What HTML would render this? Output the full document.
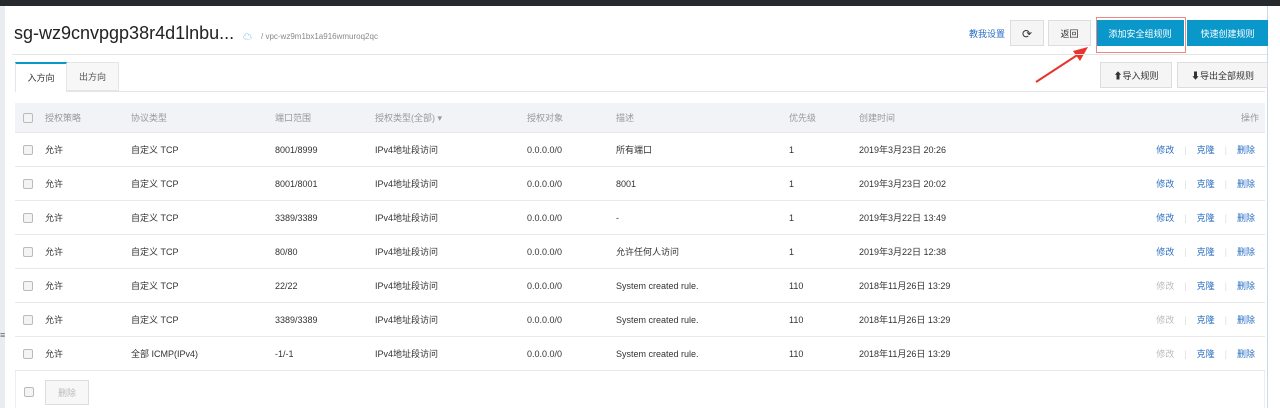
<!DOCTYPE html><html><head><meta charset="utf-8"><style>
body{margin:0;width:1280px;height:408px;overflow:hidden;background:#fff;font-family:"Liberation Sans","Noto Sans CJK SC",sans-serif;font-size:9px;color:#333;position:relative}
.a{position:absolute}
.top{left:0;top:0;width:1280px;height:6px;background:#262a2f}
.strip{left:0;top:6px;width:5px;height:402px;background:#e9edf2}
.rl{left:1267px;top:6px;width:1px;height:402px;background:#c9d9ea}
.btn{position:absolute;height:26px;line-height:26px;text-align:center;border:1px solid #ddd;background:#f5f5f5;box-sizing:border-box;font-size:9px;color:#333}
.blue{background:#0a98cb;border-color:#0a98cb;color:#fff}
.row{position:absolute;left:15px;width:1250px;height:34px;border-bottom:1px solid #e8e8e8;box-sizing:border-box}
.row span{position:absolute;top:0;line-height:34px;white-space:nowrap}
.cb{position:absolute;left:8px;top:12px;width:8px;height:8px;border:1px solid #bbb;border-radius:2px;background:#f4f4f4}
.ops{right:10px}
.ops i{font-style:normal;color:#2a6fc4}
.ops b{font-weight:normal;color:#ddd;margin:0 10px}
.g{color:#bbb!important}
</style></head><body>
<div class="a top"></div><div class="a strip"></div><div class="a rl"></div>
<div class="a" style="left:14px;top:23px;font-size:18px;color:#222">sg-wz9cnvpgp38r4d1lnbu...</div>
<div class="a" style="left:243px;top:30px;font-size:9px;color:#2a9fd6">☁</div>
<div class="a" style="left:261px;top:32px;font-size:8px;color:#888">/ vpc-wz9m1bx1a916wmuroq2qc</div>
<div class="a" style="left:969px;top:27px;color:#2a6fc4">教我设置</div>
<div class="btn" style="left:1010px;top:20px;width:34px;font-size:12px">⟳</div>
<div class="btn" style="left:1048px;top:20px;width:43px">返回</div>
<div class="btn blue" style="left:1096px;top:20px;width:88px">添加安全组规则</div>
<div class="btn blue" style="left:1187px;top:20px;width:81px">快速创建规则</div>
<div class="a" style="left:1096px;top:17px;width:90px;height:36px;border:1px solid #e88;box-sizing:border-box"></div>
<svg class="a" style="left:1030px;top:44px" width="64" height="42"><line x1="6" y1="38" x2="52" y2="8" stroke="#e8342c" stroke-width="2"/><polygon points="58,3 43,7 50,17" fill="#e8342c"/></svg>
<div class="a" style="left:12px;top:54px;width:1255px;height:1px;background:#e5e5e5"></div>
<div class="a" style="left:15px;top:91px;width:1250px;height:1px;background:#e5e5e5"></div>
<div class="a" style="left:15px;top:62px;width:52px;height:30px;border:1px solid #e5e5e5;border-top:2px solid #0a98cb;border-bottom:none;background:#fff;box-sizing:border-box;text-align:center;line-height:28px">入方向</div>
<div class="a" style="left:67px;top:62px;width:52px;height:29px;border:1px solid #e5e5e5;border-left:none;background:#f7f7f7;box-sizing:border-box;text-align:center;line-height:28px;color:#555">出方向</div>
<div class="btn" style="left:1100px;top:62px;width:72px">⬆导入规则</div>
<div class="btn" style="left:1177px;top:62px;width:91px">⬇导出全部规则</div>
<div class="row" style="top:103px;height:30px;background:#f1f3f6;color:#999"><div class="cb" style="top:10px"></div>
<span style="left:30px;line-height:30px">授权策略</span><span style="left:116px;line-height:30px">协议类型</span><span style="left:260px;line-height:30px">端口范围</span><span style="left:360px;line-height:30px">授权类型(全部) ▾</span><span style="left:512px;line-height:30px">授权对象</span><span style="left:601px;line-height:30px">描述</span><span style="left:774px;line-height:30px">优先级</span><span style="left:844px;line-height:30px">创建时间</span><span style="right:6px;line-height:30px">操作</span></div>
<div class="row" style="top:133px"><div class="cb"></div><span style="left:30px">允许</span><span style="left:116px">自定义 TCP</span><span style="left:260px">8001/8999</span><span style="left:360px">IPv4地址段访问</span><span style="left:512px">0.0.0.0/0</span><span style="left:601px">所有端口</span><span style="left:774px">1</span><span style="left:844px">2019年3月23日 20:26</span><span class="ops"><i>修改</i><b>|</b><i>克隆</i><b>|</b><i>删除</i></span></div>
<div class="row" style="top:167px"><div class="cb"></div><span style="left:30px">允许</span><span style="left:116px">自定义 TCP</span><span style="left:260px">8001/8001</span><span style="left:360px">IPv4地址段访问</span><span style="left:512px">0.0.0.0/0</span><span style="left:601px">8001</span><span style="left:774px">1</span><span style="left:844px">2019年3月23日 20:02</span><span class="ops"><i>修改</i><b>|</b><i>克隆</i><b>|</b><i>删除</i></span></div>
<div class="row" style="top:201px"><div class="cb"></div><span style="left:30px">允许</span><span style="left:116px">自定义 TCP</span><span style="left:260px">3389/3389</span><span style="left:360px">IPv4地址段访问</span><span style="left:512px">0.0.0.0/0</span><span style="left:601px">-</span><span style="left:774px">1</span><span style="left:844px">2019年3月22日 13:49</span><span class="ops"><i>修改</i><b>|</b><i>克隆</i><b>|</b><i>删除</i></span></div>
<div class="row" style="top:235px"><div class="cb"></div><span style="left:30px">允许</span><span style="left:116px">自定义 TCP</span><span style="left:260px">80/80</span><span style="left:360px">IPv4地址段访问</span><span style="left:512px">0.0.0.0/0</span><span style="left:601px">允许任何人访问</span><span style="left:774px">1</span><span style="left:844px">2019年3月22日 12:38</span><span class="ops"><i>修改</i><b>|</b><i>克隆</i><b>|</b><i>删除</i></span></div>
<div class="row" style="top:269px"><div class="cb"></div><span style="left:30px">允许</span><span style="left:116px">自定义 TCP</span><span style="left:260px">22/22</span><span style="left:360px">IPv4地址段访问</span><span style="left:512px">0.0.0.0/0</span><span style="left:601px">System created rule.</span><span style="left:774px">110</span><span style="left:844px">2018年11月26日 13:29</span><span class="ops"><i class="g">修改</i><b>|</b><i>克隆</i><b>|</b><i>删除</i></span></div>
<div class="row" style="top:303px"><div class="cb"></div><span style="left:30px">允许</span><span style="left:116px">自定义 TCP</span><span style="left:260px">3389/3389</span><span style="left:360px">IPv4地址段访问</span><span style="left:512px">0.0.0.0/0</span><span style="left:601px">System created rule.</span><span style="left:774px">110</span><span style="left:844px">2018年11月26日 13:29</span><span class="ops"><i class="g">修改</i><b>|</b><i>克隆</i><b>|</b><i>删除</i></span></div>
<div class="row" style="top:337px"><div class="cb"></div><span style="left:30px">允许</span><span style="left:116px">全部 ICMP(IPv4)</span><span style="left:260px">-1/-1</span><span style="left:360px">IPv4地址段访问</span><span style="left:512px">0.0.0.0/0</span><span style="left:601px">System created rule.</span><span style="left:774px">110</span><span style="left:844px">2018年11月26日 13:29</span><span class="ops"><i class="g">修改</i><b>|</b><i>克隆</i><b>|</b><i>删除</i></span></div>
<div class="a" style="left:15px;top:371px;width:1250px;height:37px;border-left:1px solid #eee;border-right:1px solid #eee;box-sizing:border-box"><div class="cb" style="top:16px"></div><div class="btn" style="left:29px;top:9px;width:44px;height:25px;line-height:24px;color:#bbb;background:#f7f7f7">删除</div></div>
<div class="a" style="left:0;top:330px;font-size:9px;color:#666">≡</div>
</body></html>
